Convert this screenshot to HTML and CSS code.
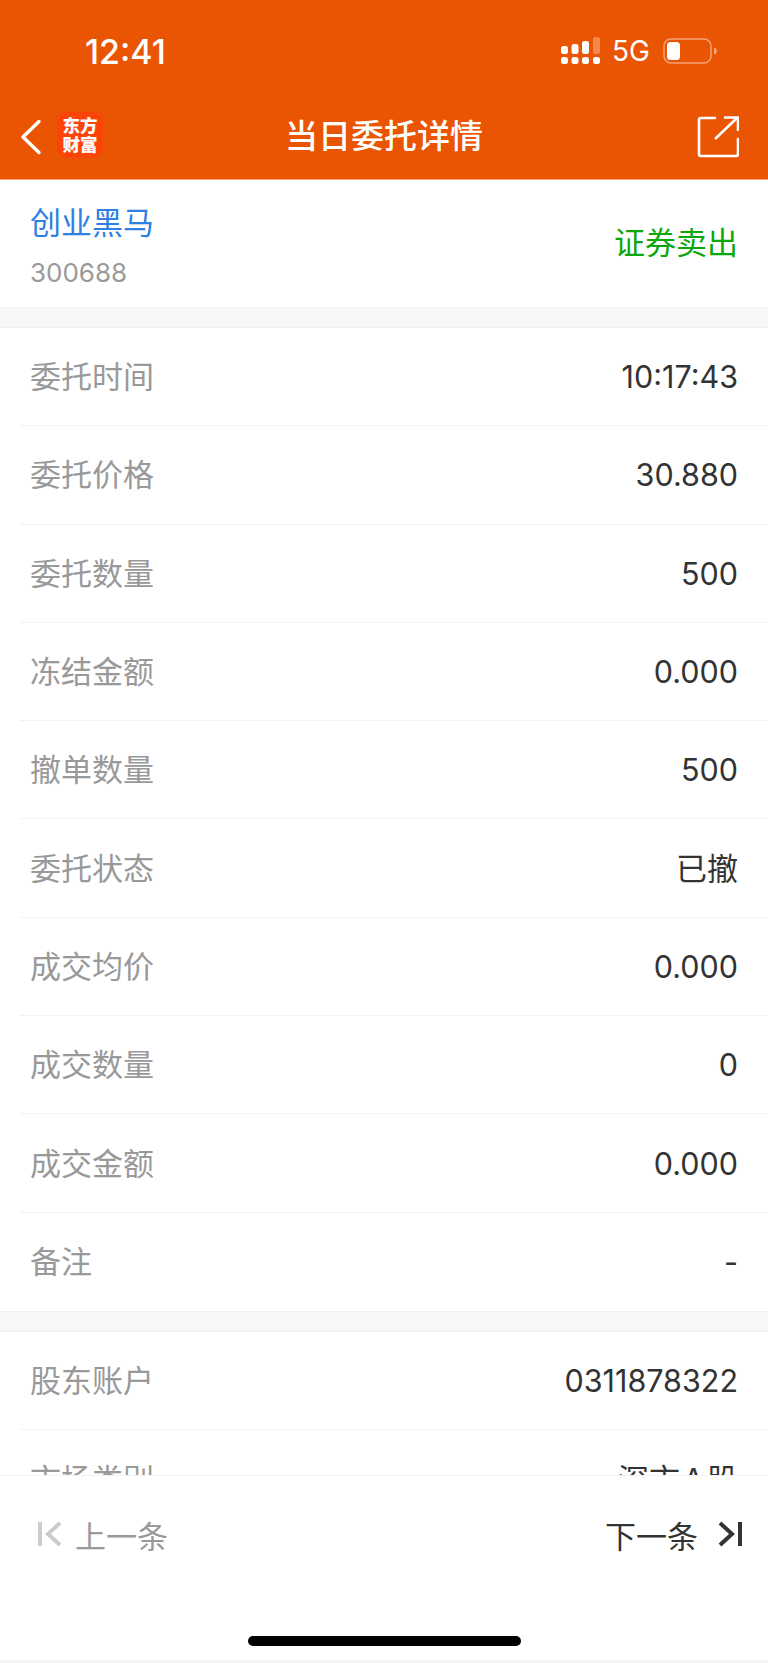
FILE: index.html
```html
<!DOCTYPE html>
<html lang="zh-CN">
<head>
  <meta charset="UTF-8">
  <meta name="viewport" content="width=device-width, initial-scale=1.0">
  <link rel="stylesheet" href="styles.css">
  <title>当日委托详情</title>
</head>
<body>
  <div class="page">
    <div class="header">
      <div class="status-bar">
        <span class="clock">12:41</span>
        <div class="status-icons">
          <svg class="signal" width="39" height="28" viewBox="0 0 39 28">
            <rect x="0" y="9" width="7" height="8" rx="2.5" fill="#fff"/>
            <rect x="10.5" y="7" width="7" height="10" rx="2.5" fill="#fff"/>
            <rect x="21" y="4" width="7" height="13" rx="2.5" fill="#fff"/>
            <rect x="32" y="0" width="7" height="17" rx="2.5" fill="#fff" opacity="0.3"/>
            <rect x="0" y="20" width="7" height="7" rx="2.5" fill="#fff"/>
            <rect x="10.5" y="20" width="7" height="7" rx="2.5" fill="#fff"/>
            <rect x="21" y="20" width="7" height="7" rx="2.5" fill="#fff"/>
            <rect x="32" y="20" width="7" height="7" rx="2.5" fill="#fff"/>
          </svg>
          <span class="network">5G</span>
          <svg class="battery" width="54" height="26" viewBox="0 0 54 26">
            <rect x="1" y="1" width="47" height="24" rx="7" fill="none" stroke="#fff" stroke-opacity="0.45" stroke-width="1.5"/>
            <rect x="4" y="4" width="13" height="18" rx="3.5" fill="#fff"/>
            <path d="M51 9.5c2 .6 3 2 3 3.500s-1 2.900-3 3.500z" fill="#fff" fill-opacity="0.45"/>
          </svg>
        </div>
      </div>
      <div class="nav-bar">
        <div class="nav-left">
          <svg class="back" width="22" height="36" viewBox="0 0 22 36">
            <path d="M19 2.500 3 18l16 15.500" fill="none" stroke="#fff" stroke-width="3.400" stroke-linecap="round" stroke-linejoin="round"/>
          </svg>
          <div class="logo"><span>东方</span><span>财富</span></div>
        </div>
        <h1 class="nav-title">当日委托详情</h1>
        <svg class="share" width="42" height="42" viewBox="0 0 42 42">
          <path d="M18 2H4a2 2 0 0 0-2 2v34a2 2 0 0 0 2 2h35a2 2 0 0 0 2-2V23" fill="none" stroke="#fff" stroke-width="2.600" stroke-linecap="round"/>
          <path d="M18 23 40 2M27 1.500h14V15" fill="none" stroke="#fff" stroke-width="2.600"/>
        </svg>
      </div>
    </div>

    <div class="content">
      <div class="stock-card">
        <div>
          <div class="stock-name">创业黑马</div>
          <div class="stock-code">300688</div>
        </div>
        <div class="trade-type">证券卖出</div>
      </div>

      <div class="section">
        <div class="row"><span class="label">委托时间</span><span class="value num">10:17:43</span></div>
        <div class="row"><span class="label">委托价格</span><span class="value num">30.880</span></div>
        <div class="row"><span class="label">委托数量</span><span class="value num">500</span></div>
        <div class="row"><span class="label">冻结金额</span><span class="value num">0.000</span></div>
        <div class="row"><span class="label">撤单数量</span><span class="value num">500</span></div>
        <div class="row"><span class="label">委托状态</span><span class="value">已撤</span></div>
        <div class="row"><span class="label">成交均价</span><span class="value num">0.000</span></div>
        <div class="row"><span class="label">成交数量</span><span class="value num">0</span></div>
        <div class="row"><span class="label">成交金额</span><span class="value num">0.000</span></div>
        <div class="row"><span class="label">备注</span><span class="value num">-</span></div>
      </div>

      <div class="section">
        <div class="row"><span class="label">股东账户</span><span class="value num">0311878322</span></div>
        <div class="row"><span class="label">市场类别</span><span class="value">深市&#8202;A&#8202;股</span></div>
      </div>
    </div>

    <div class="footer">
      <div class="pager">
        <div class="pager-btn prev">
          <svg width="24" height="26" viewBox="0 0 24 26">
            <path d="M2 1v24" stroke="#ccc" stroke-width="4" fill="none"/>
            <path d="M22 2 10 13l12 11" stroke="#ccc" stroke-width="4" fill="none"/>
          </svg>
          <span>上一条</span>
        </div>
        <div class="pager-btn next">
          <span>下一条</span>
          <svg width="24" height="26" viewBox="0 0 24 26">
            <path d="M2 2l12 11L2 24" stroke="#333" stroke-width="4" fill="none"/>
            <path d="M22 1v24" stroke="#333" stroke-width="4" fill="none"/>
          </svg>
        </div>
      </div>
      <div class="home-bar"></div>
    </div>
  </div>
</body>
</html>
```

FILE: styles.css
```css
* {
  box-sizing: border-box;
}

body {
  margin: 0;
  background-color: #fff;
  font-family: Inter, "Noto Sans CJK SC", sans-serif;
}

.page {
  display: flex;
  flex-direction: column;
  width: 768px;
  height: 1663px;
  overflow: hidden;
}

.header {
  flex: none;
  height: 180px;
  background-color: #ea5504;
  color: #fff;
  border-bottom: 1px solid #f7a27a;
}

.status-bar {
  display: flex;
  justify-content: space-between;
  align-items: center;
  height: 102px;
  padding: 0 51px 0 85px;
}

.clock {
  font-size: 34px;
  font-weight: 500;
}

.status-icons {
  display: flex;
  align-items: center;
  gap: 12px;
}

.network {
  font-size: 28px;
  font-weight: 400;
}

.battery {
  margin-left: 1px;
}

.nav-bar {
  position: relative;
  display: flex;
  justify-content: space-between;
  align-items: center;
  height: 70px;
  padding: 0 29px 0 20px;
}

.nav-left {
  display: flex;
  align-items: center;
  gap: 15px;
}

.logo {
  display: flex;
  flex-direction: column;
  align-items: center;
  justify-content: center;
  width: 46px;
  height: 46px;
  margin-top: -4px;
  border-radius: 10px;
  background-color: #fb4409;
  font-size: 17.500px;
  font-weight: 900;
  line-height: 19px;
}

.nav-title {
  position: absolute;
  left: 0;
  right: 0;
  margin: 0;
  padding-bottom: 6px;
  text-align: center;
  font-size: 33px;
  font-weight: 500;
}

.content {
  flex: 1;
  min-height: 0;
  overflow: hidden;
  background-color: #f6f7f9;
}

.stock-card {
  display: flex;
  justify-content: space-between;
  align-items: center;
  height: 128px;
  padding: 0 30px;
  background-color: #fff;
  border-bottom: 1px solid #f0f1f3;
}

.stock-name {
  color: #2f80e4;
  font-size: 31px;
  line-height: 44px;
  margin-top: 2px;
}

.stock-code {
  color: #999;
  font-size: 26px;
  line-height: 30px;
  margin-top: 13px;
}

.trade-type {
  color: #0ba70b;
  font-size: 31px;
  margin-top: -6px;
}

.section {
  margin-top: 19px;
  padding-left: 20px;
  background-color: #fff;
  border-top: 1px solid #eeeff1;
  border-bottom: 1px solid #eeeff1;
}

.row {
  display: flex;
  justify-content: space-between;
  align-items: center;
  height: 98.300px;
  padding: 0 30px 4px 10px;
  border-bottom: 1px solid #f3f3f3;
}

.row:last-child {
  border-bottom: none;
}

.label {
  color: #999;
  font-size: 31px;
}

.value {
  color: #333;
  font-size: 31px;
}

.num {
  padding-top: 4px;
  font-size: 30.500px;
}

.footer {
  flex: none;
  height: 188px;
  background-color: #fff;
  border-top: 1px solid #f2f2f2;
  border-bottom: 3px solid #f5f5f5;
}

.pager {
  display: flex;
  justify-content: space-between;
  align-items: center;
  height: 116px;
  padding: 0 26px 0 38px;
  font-size: 31px;
}

.pager-btn {
  display: flex;
  align-items: center;
  gap: 13px;
}

.prev {
  color: #999;
}

.next {
  color: #333;
  gap: 20px;
}

.home-bar {
  width: 273px;
  height: 10px;
  margin: 44px auto 0;
  border-radius: 5px;
  background-color: #000;
}
```
